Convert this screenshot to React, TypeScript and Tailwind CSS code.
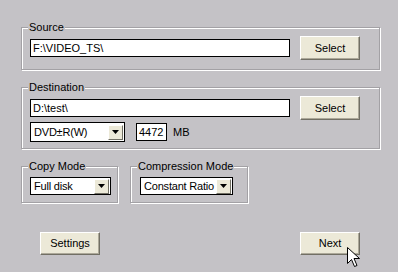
import React from "react";

const groupBox =
  "m-0 border border-[#a3a1a5] p-0 shadow-[inset_1px_1px_0_#fff,1px_1px_0_#fff]";
const legendCls = "ml-[6px] bg-[#c4c2c6] px-[1px] leading-[14px]";
const button =
  "flex items-center justify-center border border-t-white border-l-white border-r-[#716f64] border-b-[#716f64] bg-[#ece9d8] shadow-[inset_-1px_-1px_0_#aca899] text-black";

function Combo({ value, width, height }: { value: string; width: string; height: string }) {
  return (
    <div className={`flex items-center border border-black bg-white ${width} ${height}`}>
      <span className="min-w-0 flex-1 overflow-hidden whitespace-nowrap pl-[3px] leading-[14px] tracking-[-0.2px]">
        {value}
      </span>
      <span className="mr-[1px] flex h-[15px] w-[15px] shrink-0 items-center justify-center border border-t-white border-l-white border-r-[#716f64] border-b-[#716f64] bg-[#ece9d8]">
        <svg width="7" height="4" viewBox="0 0 7 4">
          <path d="M0 0h7L3.5 4z" fill="#000" />
        </svg>
      </span>
    </div>
  );
}

function Cursor() {
  return (
    <svg
      className="absolute left-[347px] top-[247px]"
      width="13"
      height="21"
      viewBox="0 0 13 21"
    >
      <path
        d="M0.5 0.5V16.5L4.5 12.5L7.5 19.5L10 18.5L7 11.5H12.5Z"
        fill="#fff"
        stroke="#000"
        strokeWidth="1"
        strokeLinejoin="miter"
      />
    </svg>
  );
}

export default function App() {
  return (
    <div className="relative h-[272px] w-[398px] overflow-hidden bg-[#c4c2c6] pl-[21px] pt-[20px] font-['Liberation_Sans',Arial,sans-serif] text-[11px] text-black">
      <fieldset className={`${groupBox} w-[359px]`}>
        <legend className={legendCls}>Source</legend>
        <div className="flex items-center gap-[10px] pb-[9px] pl-[8px] pt-[2px]">
          <div className="flex h-[18px] w-[260px] items-center border border-black bg-white pl-[2px]">
            F:\VIDEO_TS\
          </div>
          <button className={`${button} h-[24px] w-[60px]`}>Select</button>
        </div>
      </fieldset>

      <fieldset className={`${groupBox} mt-[10px] w-[359px]`}>
        <legend className={legendCls}>Destination</legend>
        <div className="flex flex-col gap-[2px] pb-[6px] pl-[8px] pt-[2px]">
          <div className="flex items-center gap-[10px]">
            <div className="flex h-[18px] w-[260px] items-center border border-black bg-white pl-[2px]">
              D:\test\
            </div>
            <button className={`${button} h-[24px] w-[60px]`}>Select</button>
          </div>
          <div className="flex items-center">
            <Combo value="DVD±R(W)" width="w-[95px]" height="h-[20px]" />
            <div className="ml-[11px] flex h-[18px] w-[31px] items-center border border-black bg-white pl-[2px]">
              4472
            </div>
            <span className="ml-[6px]">MB</span>
          </div>
        </div>
      </fieldset>

      <div className="mt-[10px] flex gap-[12px]">
        <fieldset className={`${groupBox} w-[97px]`}>
          <legend className={legendCls}>Copy Mode</legend>
          <div className="pb-[7px] pl-[8px] pt-[4px]">
            <Combo value="Full disk" width="w-[81px]" height="h-[18px]" />
          </div>
        </fieldset>
        <fieldset className={`${groupBox} w-[118px]`}>
          <legend className={legendCls}>Compression Mode</legend>
          <div className="pb-[7px] pl-[9px] pt-[4px]">
            <Combo value="Constant Ratio" width="w-[93px]" height="h-[18px]" />
          </div>
        </fieldset>
      </div>

      <div className="ml-[19px] mt-[29px] flex w-[320px] justify-between">
        <button className={`${button} h-[23px] w-[60px]`}>Settings</button>
        <button className={`${button} h-[23px] w-[60px]`}>Next</button>
      </div>

      <Cursor />
    </div>
  );
}
